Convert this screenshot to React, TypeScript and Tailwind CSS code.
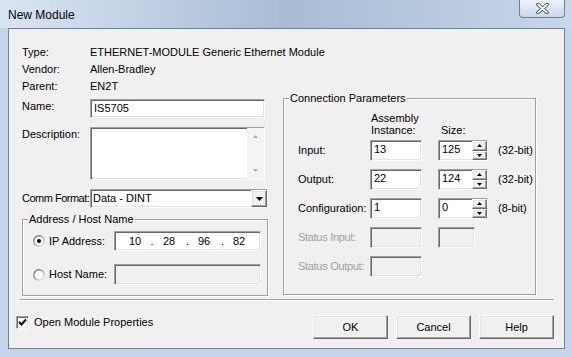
import React from "react";

const sunken =
  "border border-t-[#a0a0a0] border-l-[#a0a0a0] border-r-white border-b-white shadow-[inset_1px_1px_0_#696969,inset_-1px_-1px_0_#e3e3e3]";
const raised =
  "border border-t-white border-l-white border-r-[#696969] border-b-[#696969] shadow-[inset_-1px_-1px_0_#a0a0a0,inset_1px_1px_0_#e3e3e3] bg-[#f0f0f0]";

function GroupBox({
  title,
  className,
  children,
}: {
  title: string;
  className: string;
  children: React.ReactNode;
}) {
  return (
    <div
      className={
        "relative border border-[#a0a0a0] shadow-[1px_1px_0_white,inset_1px_1px_0_white] " +
        className
      }
    >
      <span className="absolute -top-[7px] left-[5px] bg-[#f0f0f0] px-[1px] leading-[13px] whitespace-nowrap">
        {title}
      </span>
      {children}
    </div>
  );
}

function Arrow({ up, color = "#000" }: { up?: boolean; color?: string }) {
  return (
    <svg width="5" height="3" viewBox="0 0 5 3">
      <path d={up ? "M2.5 0L5 3H0z" : "M0 0H5L2.5 3z"} fill={color} />
    </svg>
  );
}

function Spinner() {
  return (
    <div className="flex flex-col w-[15px] h-full">
      <div className={raised + " flex-1 flex items-center justify-center"}>
        <Arrow up />
      </div>
      <div className={raised + " flex-1 flex items-center justify-center"}>
        <Arrow />
      </div>
    </div>
  );
}

function Radio({ checked }: { checked?: boolean }) {
  return (
    <svg width="12" height="12" viewBox="0 0 12 12">
      <defs>
        <linearGradient id="rg" x1="0" y1="0" x2="1" y2="1">
          <stop offset="0" stopColor="#6a6a6a" />
          <stop offset="0.5" stopColor="#a0a0a0" />
          <stop offset="1" stopColor="#f5f5f5" />
        </linearGradient>
      </defs>
      <circle cx="6" cy="6" r="5.2" fill="#fff" stroke="url(#rg)" strokeWidth="1.4" />
      {checked && <circle cx="6" cy="6" r="2" fill="#000" />}
    </svg>
  );
}

function ParamRow({
  label,
  inst,
  size,
  unit,
  disabled,
  noSize,
}: {
  label: string;
  inst?: string;
  size?: string;
  unit?: string;
  disabled?: boolean;
  noSize?: boolean;
}) {
  return (
    <div className="flex items-center h-[21px]">
      <span
        className={
          "w-[72px] shrink-0 whitespace-nowrap " +
          (disabled ? "text-[#a0a0a0] tracking-[-0.3px]" : "")
        }
      >
        {label}
      </span>
      <div
        className={
          sunken +
          " shrink-0 w-[52px] h-full pl-[3px] pt-[2px] leading-[13px] " +
          (disabled ? "bg-[#f0f0f0]" : "bg-white")
        }
      >
        {inst}
      </div>
      {!noSize &&
        (disabled ? (
          <div className={sunken + " ml-[16px] w-[37px] h-full bg-[#f0f0f0]"} />
        ) : (
          <>
            <div className={sunken + " ml-[16px] w-[50px] h-full bg-white flex"}>
              <span className="flex-1 pl-[3px] pt-[2px] leading-[13px]">{size}</span>
              <Spinner />
            </div>
            <span className="ml-[10px] whitespace-nowrap">{unit}</span>
          </>
        ))}
    </div>
  );
}

export default function App() {
  return (
    <div className="w-[572px] h-[357px] flex flex-col bg-[#c4d5ea] font-['Liberation_Sans',Arial,sans-serif] text-[11px] text-black overflow-hidden">
      {/* title bar */}
      <div className="h-[28px] shrink-0 flex items-start bg-linear-to-r from-[#dae5f2] via-[#a8bcd5] to-[#c8d7e9] pl-[8px] pr-[7px]">
        <span className="text-[12px] leading-[12px] mt-[9px]">New Module</span>
        <div className="ml-auto w-[46px] h-[18px] rounded-b-[4px] border border-t-0 border-[#6f7f95] bg-linear-to-b from-[#eef3f9] to-[#c9d7e8] flex items-center justify-center">
          <svg width="13" height="11" viewBox="0 0 13 11">
            <path d="M2 1.5L11 9.5M11 1.5L2 9.5" stroke="#3b4658" strokeWidth="3.6" strokeLinecap="round" />
            <path d="M2 1.5L11 9.5M11 1.5L2 9.5" stroke="#fff" strokeWidth="1.8" strokeLinecap="round" />
          </svg>
        </div>
      </div>

      {/* client */}
      <div className="h-[321px] shrink-0 ml-[8px] mr-[7px] border border-[#6f7f95] bg-[#f0f0f0] pl-[13px] pr-[10px] pt-[15px] whitespace-nowrap">
        <div className="flex h-[17px] items-center">
          <span className="w-[68px]">Type:</span>
          <span>ETHERNET-MODULE Generic Ethernet Module</span>
        </div>
        <div className="flex h-[17px] items-center">
          <span className="w-[68px]">Vendor:</span>
          <span>Allen-Bradley</span>
        </div>
        <div className="flex h-[17px] items-center">
          <span className="w-[68px]">Parent:</span>
          <span>EN2T</span>
        </div>

        <div className="flex mt-[3px]">
          {/* left column */}
          <div className="w-[246px] shrink-0 flex flex-col">
            <div className="flex mt-[1px]">
              <span className="w-[68px] shrink-0 pt-[1px] leading-[13px]">Name:</span>
              <div className={sunken + " w-[175px] h-[19px] bg-white pl-[3px] pt-[2px] leading-[13px]"}>
                IS5705
              </div>
            </div>
            <div className="flex mt-[9px]">
              <span className="w-[68px] shrink-0 pt-[1px] leading-[13px]">Description:</span>
              <div className={sunken + " w-[175px] h-[53px] bg-white flex justify-end"}>
                <div className="w-[17px] h-full flex flex-col bg-[#f4f4f4]">
                  <div className="h-[17px] flex items-center justify-center">
                    <Arrow up color="#a8a8a8" />
                  </div>
                  <div className="flex-1" />
                  <div className="h-[17px] flex items-center justify-center">
                    <Arrow color="#a8a8a8" />
                  </div>
                </div>
              </div>
            </div>
            <div className="flex items-center mt-[9px]">
              <span className="w-[68px] shrink-0 tracking-[-0.5px]">Comm Format:</span>
              <div className={sunken + " w-[178px] h-[19px] bg-white flex"}>
                <span className="flex-1 pl-[2px] pt-[2px] leading-[13px]">Data - DINT</span>
                <div className={raised + " w-[16px] h-full flex items-center justify-center"}>
                  <svg width="7" height="4" viewBox="0 0 7 4">
                    <path d="M0 0H7L3.5 4z" fill="#000" />
                  </svg>
                </div>
              </div>
            </div>

            <GroupBox title="Address / Host Name" className="mt-[11px] h-[77px] pt-[11px]">
              <div className="flex items-center h-[20px] pl-[10px]">
                <Radio checked />
                <span className="ml-[4px] w-[65px]">IP Address:</span>
                <div className={sunken + " w-[147px] h-full bg-white flex items-center pl-[14px]"}>
                  <span className="w-[12px]">10</span>
                  <span className="w-[22px] text-center">.</span>
                  <span className="w-[14px]">28</span>
                  <span className="w-[21px] text-center">.</span>
                  <span className="w-[14px]">96</span>
                  <span className="w-[21px] text-center">.</span>
                  <span>82</span>
                </div>
              </div>
              <div className="flex items-center h-[21px] mt-[13px] pl-[10px]">
                <Radio />
                <span className="ml-[4px] w-[65px]">Host Name:</span>
                <div className={sunken + " w-[147px] h-full bg-[#f0f0f0]"} />
              </div>
            </GroupBox>
          </div>

          {/* right column */}
          <GroupBox title="Connection Parameters" className="ml-[15px] w-[253px] h-[197px] pt-[13px] pl-[14px]">
            <div className="flex h-[28px]">
              <div className="ml-[72px] w-[52px] leading-[12px] pl-[1px]">
                Assembly
                <br />
                Instance:
              </div>
              <div className="ml-[19px] pt-[12px] leading-[12px]">Size:</div>
            </div>
            <div className="flex flex-col gap-[8px]">
              <ParamRow label="Input:" inst="13" size="125" unit="(32-bit)" />
              <ParamRow label="Output:" inst="22" size="124" unit="(32-bit)" />
              <ParamRow label="Configuration:" inst="1" size="0" unit="(8-bit)" />
              <ParamRow label="Status Input:" disabled />
              <ParamRow label="Status Output:" disabled noSize />
            </div>
          </GroupBox>
        </div>

        {/* separator */}
        <div className="-ml-[2px] mt-[3px] h-[2px] border-t border-[#a0a0a0] border-b border-b-white" />

        {/* bottom row */}
        <div className="flex items-start mt-[14px]">
          <div className={sunken + " -ml-[6px] mt-[1px] w-[13px] h-[13px] bg-white flex items-center justify-center"}>
            <svg width="9" height="9" viewBox="0 0 9 9">
              <path d="M1 4L3.5 6.5L8 1.5" stroke="#000" strokeWidth="2" fill="none" />
            </svg>
          </div>
          <span className="ml-[5px] mt-[1px] leading-[13px]">Open Module Properties</span>
          <div className="ml-auto flex gap-[8px]">
            <button className={raised + " w-[75px] h-[24px]"}>OK</button>
            <button className={raised + " w-[75px] h-[24px]"}>Cancel</button>
            <button className={raised + " w-[75px] h-[24px]"}>Help</button>
          </div>
        </div>
      </div>
    </div>
  );
}
